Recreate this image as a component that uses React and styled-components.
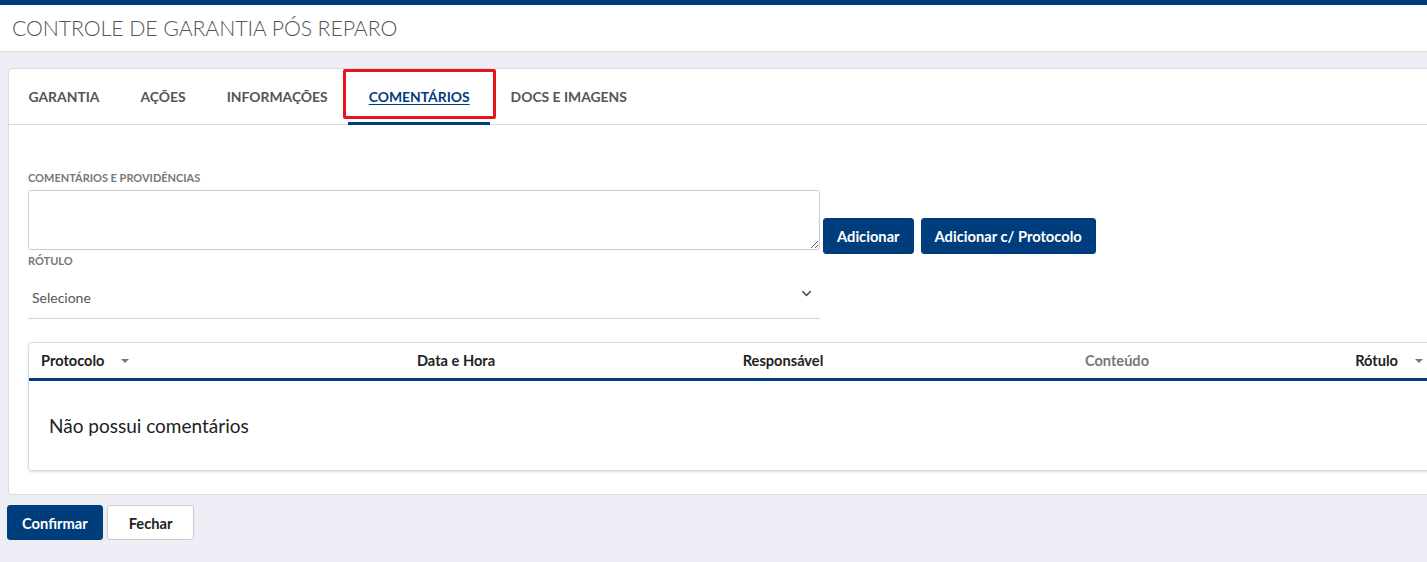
import React from "react";
import styled, { createGlobalStyle } from "styled-components";
import { FiChevronDown } from "react-icons/fi";

const BLUE = "#003d7c";

const GlobalStyle = createGlobalStyle`
  body {
    margin: 0;
    background: #eeeef7;
    font-family: Lato, "Open Sans", sans-serif;
    color: #333;
    overflow: hidden;
  }
`;

const Page = styled.div`
  width: 1470px;
  min-height: 562px;
`;

const TopStripe = styled.div`
  height: 5px;
  background: ${BLUE};
`;

const Header = styled.header`
  height: 46px;
  display: flex;
  align-items: center;
  padding-left: 12px;
  background: #fff;
  border-bottom: 1px solid #dcdcdc;
`;

const Title = styled.h1`
  margin: 0;
  font-size: 21.3px;
  font-weight: 300;
  color: #555;
  letter-spacing: -0.1px;
`;

const Main = styled.main`
  padding: 16px 0 0 8px;
`;

const Card = styled.section`
  width: 1452px;
  background: #fff;
  border: 1px solid #dcdcdc;
  border-radius: 4px;
`;

const TabBar = styled.nav`
  display: flex;
  height: 55px;
  border-bottom: 1px solid #dcdcdc;
  margin-left: -1px;
`;

const Tab = styled.div`
  position: relative;
  display: flex;
  align-items: center;
  padding: 0 20.5px 2px;
  font-size: 13.9px;
  font-weight: 700;
  text-transform: uppercase;
  color: ${(p) => (p.$active ? BLUE : "#555")};
  text-decoration: ${(p) => (p.$active ? "underline" : "none")};
  text-underline-offset: 2px;
  box-shadow: ${(p) => (p.$active ? `inset 0 -3px 0 ${BLUE}` : "none")};
  margin-bottom: -1px;
  cursor: pointer;
`;

const Highlight = styled.span`
  position: absolute;
  top: 0;
  left: -5px;
  right: -6px;
  bottom: 6px;
  border: 3px solid #e8141b;
  border-radius: 2px;
  pointer-events: none;
`;

const Body = styled.div`
  padding: 46px 20px 23px 19px;
`;

const FieldLabel = styled.label`
  display: block;
  font-size: 11px;
  font-weight: 700;
  line-height: 14px;
  text-transform: uppercase;
  color: #777;
  margin-bottom: ${(p) => p.$gap || 0}px;
`;

const CommentRow = styled.div`
  display: flex;
  align-items: flex-end;
`;

const TextArea = styled.textarea`
  display: block;
  box-sizing: border-box;
  width: 792px;
  height: 60px;
  margin: 0 0 4px;
  border: 1px solid #ccc;
  border-radius: 3px;
  font: inherit;
`;

const ButtonGroup = styled.div`
  display: flex;
  gap: 7px;
  margin-left: 3px;
`;

const Button = styled.button`
  box-sizing: border-box;
  height: ${(p) => p.$h || 36}px;
  padding: 0 ${(p) => p.$pad || 13}px;
  border-radius: 3px;
  font-family: inherit;
  font-size: 14.7px;
  font-weight: 700;
  cursor: pointer;
  background: ${(p) => (p.$outline ? "#fff" : BLUE)};
  color: ${(p) => (p.$outline ? "#222" : "#fff")};
  border: 1px solid ${(p) => (p.$outline ? "#ccc" : BLUE)};
`;

const Select = styled.div`
  box-sizing: border-box;
  width: 792px;
  display: flex;
  align-items: center;
  justify-content: space-between;
  padding: 20px 6px 10px 4px;
  line-height: 20px;
  border-bottom: 1px solid #d6d6d6;
  font-size: 14px;
  color: #555;

  svg {
    transform: translateY(-5px);
    color: #555;
  }
`;

const Table = styled.div`
  margin-top: 23px;
  border: 1px solid #dcdcdc;
  border-radius: 4px;
  box-shadow: 0 1px 3px rgba(0, 0, 0, 0.14);
  overflow: hidden;
`;

const HeaderRow = styled.div`
  display: grid;
  grid-template-columns: 300px 230px 424px 244px 1fr;
  align-items: center;
  height: 35px;
  padding: 0 17px 0 12px;
  border-bottom: 3px solid ${BLUE};
`;

const HeadCell = styled.div`
  display: flex;
  align-items: center;
  justify-content: ${(p) => p.$align || "center"};
  gap: 17px;
  font-size: 14.6px;
  font-weight: 700;
  color: ${(p) => (p.$muted ? "#777" : "#222")};
`;

const Caret = styled.span`
  width: 0;
  height: 0;
  border-left: 4px solid transparent;
  border-right: 4px solid transparent;
  border-top: 4px solid #777;
`;

const EmptyRow = styled.div`
  height: 89px;
  display: flex;
  align-items: center;
  padding: 0 20px;
  font-size: 19px;
  color: #222;
`;

const Footer = styled.div`
  display: flex;
  gap: 4px;
  padding: 10px 0 0;
  margin-left: -1px;
`;

const tabs = ["Garantia", "Ações", "Informações", "Comentários", "Docs e Imagens"];

export default function App() {
  return (
    <Page>
      <GlobalStyle />
      <TopStripe />
      <Header>
        <Title>CONTROLE DE GARANTIA PÓS REPARO</Title>
      </Header>
      <Main>
        <Card>
          <TabBar>
            {tabs.map((t) => (
              <Tab key={t} $active={t === "Comentários"}>
                {t}
                {t === "Comentários" && <Highlight />}
              </Tab>
            ))}
          </TabBar>
          <Body>
            <FieldLabel $gap={5}>Comentários e Providências</FieldLabel>
            <CommentRow>
              <TextArea />
              <ButtonGroup>
                <Button>Adicionar</Button>
                <Button>Adicionar c/ Protocolo</Button>
              </ButtonGroup>
            </CommentRow>
            <FieldLabel>Rótulo</FieldLabel>
            <Select>
              <span>Selecione</span>
              <FiChevronDown size={15} strokeWidth={2.5} />
            </Select>
            <Table>
              <HeaderRow>
                <HeadCell $align="flex-start">
                  Protocolo <Caret />
                </HeadCell>
                <HeadCell>Data e Hora</HeadCell>
                <HeadCell>Responsável</HeadCell>
                <HeadCell $muted>Conteúdo</HeadCell>
                <HeadCell $align="flex-end">
                  Rótulo <Caret />
                </HeadCell>
              </HeaderRow>
              <EmptyRow>Não possui comentários</EmptyRow>
            </Table>
          </Body>
        </Card>
        <Footer>
          <Button $h={35} $pad={14}>
            Confirmar
          </Button>
          <Button $h={35} $pad={21} $outline>
            Fechar
          </Button>
        </Footer>
      </Main>
    </Page>
  );
}
